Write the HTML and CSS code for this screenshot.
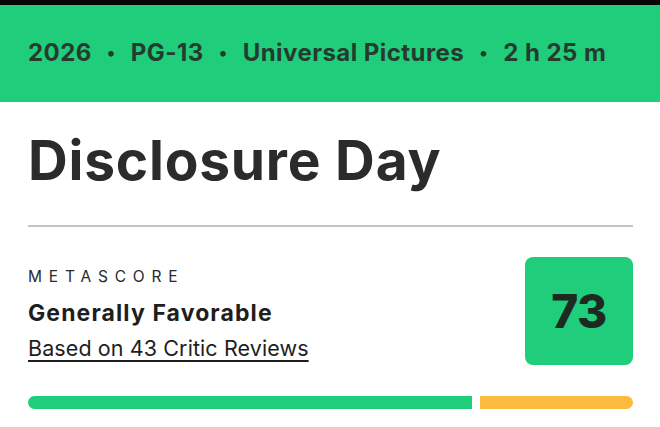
FILE: index.html
```html
<!DOCTYPE html>
<html lang="en">
<head>
    <meta charset="UTF-8">
    <title>Disclosure Day</title>
    <link rel="stylesheet" href="styles.css">
</head>
<body>

    <div class="topbar"></div>

    <div class="meta-band">
        <span>2026</span>
        <span class="dot">&bull;</span>
        <span>PG-13</span>
        <span class="dot">&bull;</span>
        <span>Universal Pictures</span>
        <span class="dot">&bull;</span>
        <span>2 h 25 m</span>
    </div>

    <div class="main">
        <h1 class="title">Disclosure Day</h1>
        <hr class="divider">

        <div class="score-row">
            <div class="score-info">
                <div class="score-label">Metascore</div>
                <div class="score-verdict">Generally Favorable</div>
                <a class="score-count" href="#">Based on 43 Critic Reviews</a>
            </div>
            <div class="score-box">73</div>
        </div>

        <div class="score-bar">
            <div class="bar-positive"></div>
            <div class="bar-mixed"></div>
        </div>
    </div>

</body>
</html>
```

FILE: styles.css
```css
* {
    margin: 0;
    padding: 0;
    box-sizing: border-box;
}

body {
    font-family: "Inter", "Liberation Sans", sans-serif;
    background: #fff;
    color: #262626;
    width: 660px;
    height: 427px;
    overflow: hidden;
}

.topbar {
    height: 5px;
    background: #050505;
}

.meta-band {
    height: 97px;
    background: #1fcd7b;
    display: flex;
    align-items: center;
    gap: 15px;
    padding: 0 28px 2px;
    font-size: 24px;
    font-weight: 700;
    color: #263b2f;
    letter-spacing: 0.45px;
}

.meta-band .dot {
    font-size: 18px;
}

.main {
    padding: 0 27px 0 28px;
}

.title {
    font-size: 55px;
    font-weight: 700;
    color: #2b2b2b;
    line-height: 1;
    margin-top: 31px;
    letter-spacing: 0.8px;
}

.divider {
    border: none;
    border-top: 2px solid #c4c4c4;
    margin-top: 37px;
}

.score-row {
    display: flex;
    justify-content: space-between;
    margin-top: 30px;
}

.score-info {
    display: flex;
    flex-direction: column;
    padding-top: 10px;
}

.score-label {
    font-size: 15.5px;
    text-transform: uppercase;
    letter-spacing: 6.8px;
    color: #2a2a2a;
}

.score-verdict {
    font-size: 23px;
    font-weight: 700;
    color: #1e1e1e;
    margin-top: 13px;
    letter-spacing: 1.1px;
}

.score-count {
    font-size: 21.5px;
    color: #1e1e1e;
    margin-top: 8px;
    letter-spacing: 0.1px;
    text-decoration: underline;
    text-decoration-thickness: 1.5px;
    text-underline-offset: 4px;
}

.score-box {
    width: 108px;
    height: 108px;
    border-radius: 8px;
    background: #1fcd7b;
    display: flex;
    align-items: center;
    justify-content: center;
    font-size: 46px;
    font-weight: 800;
    color: #1d2a22;
    letter-spacing: -0.5px;
}

.score-bar {
    display: flex;
    gap: 8px;
    height: 13px;
    margin-top: 31px;
}

.bar-positive {
    flex: 444;
    background: #1fcd7b;
    border-radius: 7px 0 0 7px;
}

.bar-mixed {
    flex: 153;
    background: #fcbb3f;
    border-radius: 0 7px 7px 0;
}
```
